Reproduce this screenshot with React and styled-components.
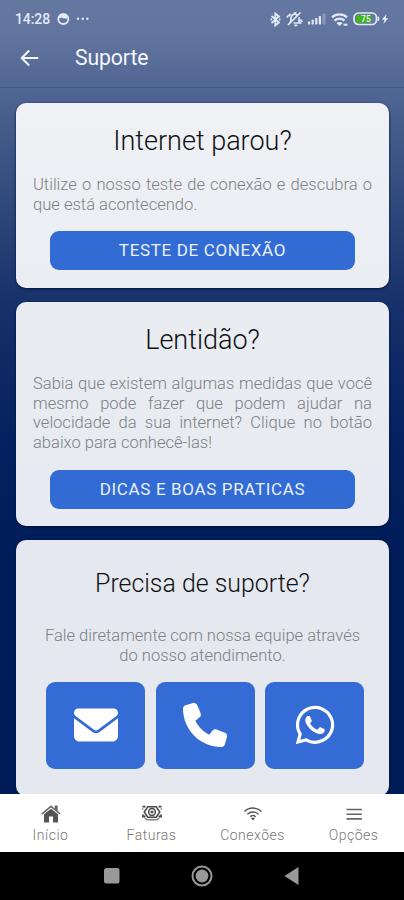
import React from "react";
import styled, { createGlobalStyle } from "styled-components";
import { FaEnvelope, FaPhone, FaWhatsapp } from "react-icons/fa6";

const GlobalStyle = createGlobalStyle`
  * { box-sizing: border-box; }
  body { margin: 0; font-family: Roboto, "Noto Sans", sans-serif; }
`;

const Screen = styled.div`
  width: 404px;
  height: 900px;
  overflow: hidden;
  display: flex;
  flex-direction: column;
  background: linear-gradient(#6478a2 0, #61749e 35px, #4d6391 100px, #304a7b 200px, #15306a 310px, #05215f 440px, #001d59 560px, #001c58 800px);
`;

const Header = styled.header`
  height: 88px;
  flex: none;
  border-bottom: 1px solid #435783;
  color: #f4f7fc;
`;

const StatusBar = styled.div`
  height: 38px;
  padding: 0 15px;
  display: flex;
  align-items: center;
  color: #e3e9f5;
  svg { display: block; flex: none; }
`;

const Clock = styled.span`
  font-size: 14px;
  font-weight: 500;
  letter-spacing: -0.1px;
  width: 41px;
`;

const StatusIcons = styled.div`
  margin-left: auto;
  display: flex;
  align-items: center;
  gap: 5px;
`;

const Power = styled.div`
  display: flex;
  align-items: center;
  gap: 1px;
  margin-left: -1px;
`;

const TitleBar = styled.div`
  height: 39px;
  display: flex;
  align-items: center;
  padding-left: 20px;
  gap: 36px;
  svg { display: block; }
`;

const PageTitle = styled.h1`
  margin: 0;
  padding-top: 1px;
  font-size: 21.2px;
  line-height: 24px;
  font-weight: 400;
  letter-spacing: -0.1px;
`;

const Content = styled.main`
  height: 706px;
  flex: none;
  padding: 15px 15px 0 16px;
  display: flex;
  flex-direction: column;
  gap: 14px;
`;

const Card = styled.section`
  flex: none;
  height: ${(p) => p.$height}px;
  padding: ${(p) => p.$top}px 17px 0;
  border-radius: 10px;
  background: ${(p) => p.$bg};
  box-shadow: 0 1px 3px #00103f;
  display: flex;
  flex-direction: column;
`;

const CardTitle = styled.h2`
  margin: 0;
  font-size: ${(p) => p.$size || 27}px;
  line-height: 32px;
  font-weight: 300;
  text-align: center;
  color: #101114;
`;

const CardText = styled.p`
  margin: ${(p) => p.$gap}px 0 0;
  padding: 0 ${(p) => p.$inset || 0}px;
  font-size: 16.55px;
  line-height: 19.7px;
  font-weight: 300;
  text-align: ${(p) => p.$align || "justify"};
  color: #7c7f84;
`;

const ActionButton = styled.button`
  margin: 17px 17px 0;
  height: 39px;
  border: 0;
  border-radius: 9px;
  background: #336bd4;
  color: #e9f0ff;
  font: 400 17px/39px Roboto, sans-serif;
  letter-spacing: 0.65px;
  padding: 0;
`;

const ContactRow = styled.div`
  display: grid;
  grid-template-columns: repeat(3, 99px);
  gap: 10.5px;
  margin: 16.5px 0 0 13px;
`;

const ContactButton = styled.button`
  height: 87px;
  padding: 0;
  border: 0;
  border-radius: 9px;
  background: #346bd4;
  color: #fff;
  display: flex;
  align-items: center;
  justify-content: center;
`;

const TabBar = styled.nav`
  height: 58px;
  flex: none;
  background: #fff;
  display: grid;
  grid-template-columns: repeat(4, 1fr);
`;

const Tab = styled.a`
  display: flex;
  flex-direction: column;
  align-items: center;
  padding-top: 10px;
  gap: 4px;
  color: #555;
  svg { display: block; }
`;

const TabLabel = styled.span`
  font-size: 14px;
  line-height: 17px;
  font-weight: 300;
  letter-spacing: 0.5px;
  color: #777;
`;

const SystemBar = styled.footer`
  height: 48px;
  flex: none;
  background: #000;
  display: flex;
  justify-content: center;
  align-items: center;
  gap: 71px;
`;

const Bluetooth = () => (
  <svg width="11" height="15" viewBox="0 0 11 15" fill="none" stroke="currentColor" strokeWidth="1.8">
    <path d="M1.5 4l7.5 6.5-3.7 3V1.5L9 4.5 1.5 11" />
    <path d="M.5 7.5h1.5M9 7.5h1.5" />
  </svg>
);

const MutedBell = () => (
  <svg width="17" height="16" viewBox="0 0 17 16" fill="none" stroke="currentColor" strokeWidth="1.7">
    <path d="M4 11.8l1-2.2V7a3.6 3.6 0 0 1 6.3-2.6M13 6.3V10l1.3 2H7.5M8.3 14.3h3M7.5 2.2h3" />
    <path d="M2 14L14.5 1.5M.8 6.5L3 4M14.5 8.5l1.8 2.5M4.5 2.8L3 5" />
  </svg>
);

const Signal = () => (
  <svg width="18" height="12" viewBox="0 0 18 12" fill="currentColor">
    <rect x="0" y="8.5" width="2.2" height="3" rx=".5" />
    <rect x="3.6" y="6.8" width="2.2" height="4.7" rx=".5" />
    <rect x="7.2" y="5" width="2.2" height="6.5" rx=".5" />
    <rect x="10.8" y="3" width="2.2" height="8.5" rx=".5" />
    <rect x="14.4" y=".5" width="3" height="11" rx=".5" opacity=".3" />
  </svg>
);

const StatusWifi = () => (
  <svg width="18" height="15" viewBox="0 0 18 15" fill="none" stroke="currentColor" strokeWidth="2.3">
    <path d="M1 5.3a11 11 0 0 1 15 0M3.5 8.6a7.3 7.3 0 0 1 10 0" />
    <path d="M5.3 11q3.2-2.2 6.4 0l-3.2 3z" fill="currentColor" stroke="none" />
    <path d="M12.5 12.7h4" strokeWidth="2" />
  </svg>
);

const Battery = () => (
  <svg width="27" height="14" viewBox="0 0 27 14">
    <rect x="1" y="1" width="22.5" height="11.5" rx="4.5" fill="#6479a2" stroke="#e3e9f5" strokeWidth="1.7" />
    <path d="M5.2 2.8H18v8H5.2A2.4 2.4 0 0 1 3 8.5V5a2.4 2.4 0 0 1 2.2-2.2z" fill="#43b51c" />
    <path d="M24.7 4.7q2 2 0 4" fill="none" stroke="#e3e9f5" strokeWidth="1.5" />
    <text x="12.9" y="9.8" textAnchor="middle" fontFamily="Roboto" fontSize="8.5" fontWeight="500" fill="#e8f4ed">75</text>
  </svg>
);

const Bolt = () => (
  <svg width="8" height="12" viewBox="0 0 8 12">
    <path d="M5.5 1L.8 6.8H3.4L2.4 11l4.9-5.8H4.7z" fill="currentColor" />
  </svg>
);

const NotificationIcons = () => (
  <svg width="36" height="14" viewBox="0 0 36 14">
    <circle cx="7.3" cy="7" r="5" fill="none" stroke="currentColor" strokeWidth="1.8" />
    <path d="M2.3 6Q3 2 7.3 2t5 4Q7 7.5 5.5 5.2 4.5 6.5 2.3 6z" fill="currentColor" />
    <g fill="currentColor">
      <circle cx="22" cy="6.7" r="1.2" />
      <circle cx="26.7" cy="6.7" r="1.2" />
      <circle cx="31.4" cy="6.7" r="1.2" />
    </g>
  </svg>
);

const House = () => (
  <svg width="20" height="19" viewBox="0 0 20 19">
    <path d="M3 10.3L10 4.8l7 5.5V18.5h-5v-6H8v6H3z" fill="#555" />
    <path d="M.8 10L10 2.3l9.2 7.7" fill="none" stroke="#666" strokeWidth="1.6" />
    <path d="M13.7 1.5h3v5.8l-3-2.6z" fill="#666" />
  </svg>
);

const Money = () => (
  <svg width="20" height="19" viewBox="0 0 20 19" fill="none" stroke="#484848">
    <path d="M5.8 2.8h8.4L17.8 8l-3.6 5.2H5.8L2.2 8z" strokeWidth="1.5" />
    <circle cx="10" cy="8" r="3.4" strokeWidth="1.5" />
    <path d="M10 6.4v3.2M8.4 8h3.2" strokeWidth="1.3" />
    <path d="M.5 2.6h3M.5 5.4v-1M16.5 2.6h3M19.5 5.4v-1M1 10.5v2h2.5M19 10.5v2h-2.5" strokeWidth="1.8" />
    <path d="M2.5 14l2.5 1.7h10l2.5-1.7" strokeWidth="1.5" stroke="#888" />
  </svg>
);

const Wifi = () => (
  <svg width="20" height="19" viewBox="0 0 20 19" fill="none" stroke="#555" strokeWidth="1.4">
    <path d="M1.5 7.4a12.5 12.5 0 0 1 17 0M4.4 10.2a8.4 8.4 0 0 1 11.2 0M7.2 12.8a4.3 4.3 0 0 1 5.6 0" />
    <path d="M8.4 14l1.6 2.2 1.6-2.2z" fill="#555" strokeWidth=".6" />
  </svg>
);

const Menu = () => (
  <svg width="20" height="19" viewBox="0 0 20 19" stroke="#666" strokeWidth="1.6">
    <path d="M2.5 5.5h15.4M2.5 10.2h15.4M2.5 14.9h15.4" />
  </svg>
);

const TABS = [
  { label: "Início", Icon: House },
  { label: "Faturas", Icon: Money },
  { label: "Conexões", Icon: Wifi },
  { label: "Opções", Icon: Menu },
];

export default function App() {
  return (
    <Screen>
      <GlobalStyle />
      <Header>
        <StatusBar>
          <Clock>14:28</Clock>
          <NotificationIcons />
          <StatusIcons>
            <Bluetooth />
            <MutedBell />
            <Signal />
            <StatusWifi />
            <Power>
              <Battery />
              <Bolt />
            </Power>
          </StatusIcons>
        </StatusBar>
        <TitleBar>
          <svg width="19" height="18" viewBox="0 0 19 18" fill="none" stroke="currentColor" strokeWidth="2">
            <path d="M18.2 9H2M9.2 1.5L1.7 9l7.5 7.5" />
          </svg>
          <PageTitle>Suporte</PageTitle>
        </TitleBar>
      </Header>
      <Content>
        <Card $height={185} $top={22} $bg="linear-gradient(#eff1f5, #eaedf2)">
          <CardTitle>Internet parou?</CardTitle>
          <CardText $gap={18}>Utilize o nosso teste de conexão e descubra o que está acontecendo.</CardText>
          <ActionButton>TESTE DE CONEXÃO</ActionButton>
        </Card>
        <Card $height={224} $top={22} $bg="linear-gradient(#e9ecf1, #e7eaf0)">
          <CardTitle>Lentidão?</CardTitle>
          <CardText $gap={18}>Sabia que existem algumas medidas que você mesmo pode fazer que podem ajudar na velocidade da sua internet? Clique no botão abaixo para conhecê-las!</CardText>
          <ActionButton>DICAS E BOAS PRATICAS</ActionButton>
        </Card>
        <Card $height={256} $top={28} $bg="#e5e8ef">
          <CardTitle $size={24.9}>Precisa de suporte?</CardTitle>
          <CardText $gap={26} $inset={8} $align="center">Fale diretamente com nossa equipe através do nosso atendimento.</CardText>
          <ContactRow>
            <ContactButton aria-label="E-mail"><FaEnvelope size={44} /></ContactButton>
            <ContactButton aria-label="Telefone"><FaPhone size={44} /></ContactButton>
            <ContactButton aria-label="WhatsApp"><FaWhatsapp size={44} /></ContactButton>
          </ContactRow>
        </Card>
      </Content>
      <TabBar>
        {TABS.map(({ label, Icon }) => (
          <Tab key={label}>
            <Icon />
            <TabLabel>{label}</TabLabel>
          </Tab>
        ))}
      </TabBar>
      <SystemBar>
        <svg width="16" height="16"><rect width="15.5" height="15.5" rx="2.5" fill="#999" /></svg>
        <svg width="22" height="22"><circle cx="11" cy="11" r="9.5" fill="none" stroke="#999" strokeWidth="2" /><circle cx="11" cy="11" r="6.4" fill="#999" /></svg>
        <svg width="16" height="20"><path d="M14.5 1v18L.5 10z" fill="#999" /></svg>
      </SystemBar>
    </Screen>
  );
}
